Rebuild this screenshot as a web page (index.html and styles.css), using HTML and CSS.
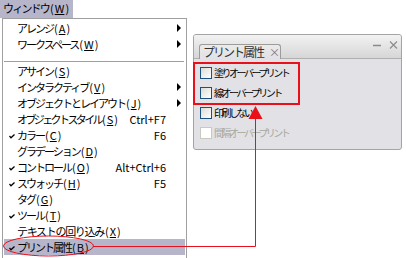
FILE: index.html
```html
<!DOCTYPE html>
<html lang="ja">
<head>
<meta charset="utf-8">
<link rel="stylesheet" href="styles.css">
</head>
<body>
<div class="menubar"><span class="menu-title">ウィンドウ<span class="mn">(<u>W</u>)</span></span></div>
<div class="menu">
  <div class="item"><span class="chk"></span><span class="label">アレンジ<span class="mn">(<u>A</u>)</span></span><span class="sc"></span><span class="sub"><i class="tri"></i></span></div>
  <div class="item"><span class="chk"></span><span class="label">ワークスペース<span class="mn">(<u>W</u>)</span></span><span class="sc"></span><span class="sub"><i class="tri"></i></span></div>
  <div class="sep"></div>
  <div class="item"><span class="chk"></span><span class="label">アサイン<span class="mn">(<u>S</u>)</span></span><span class="sc"></span><span class="sub"></span></div>
  <div class="item"><span class="chk"></span><span class="label">インタラクティブ<span class="mn">(<u>V</u>)</span></span><span class="sc"></span><span class="sub"><i class="tri"></i></span></div>
  <div class="item"><span class="chk"></span><span class="label">オブジェクトとレイアウト<span class="mn">(<u>J</u>)</span></span><span class="sc"></span><span class="sub"><i class="tri"></i></span></div>
  <div class="item"><span class="chk"></span><span class="label kata">オブジェクトスタイル<span class="mn">(<u>S</u>)</span></span><span class="sc">Ctrl+F7</span><span class="sub"></span></div>
  <div class="item"><span class="chk"><svg width="6" height="5" viewBox="0 0 6 5"><path d="M0.5 2 L2 3.8 L5.5 0.5" fill="none" stroke="#000" stroke-width="1.3"/></svg></span><span class="label">カラー<span class="mn">(<u>C</u>)</span></span><span class="sc">F6</span><span class="sub"></span></div>
  <div class="item"><span class="chk"></span><span class="label">グラデーション<span class="mn">(<u>D</u>)</span></span><span class="sc"></span><span class="sub"></span></div>
  <div class="item"><span class="chk"><svg width="6" height="5" viewBox="0 0 6 5"><path d="M0.5 2 L2 3.8 L5.5 0.5" fill="none" stroke="#000" stroke-width="1.3"/></svg></span><span class="label">コントロール<span class="mn">(<u>O</u>)</span></span><span class="sc">Alt+Ctrl+6</span><span class="sub"></span></div>
  <div class="item"><span class="chk"><svg width="6" height="5" viewBox="0 0 6 5"><path d="M0.5 2 L2 3.8 L5.5 0.5" fill="none" stroke="#000" stroke-width="1.3"/></svg></span><span class="label">スウォッチ<span class="mn">(<u>H</u>)</span></span><span class="sc">F5</span><span class="sub"></span></div>
  <div class="item"><span class="chk"></span><span class="label">タグ<span class="mn">(<u>G</u>)</span></span><span class="sc"></span><span class="sub"></span></div>
  <div class="item"><span class="chk"><svg width="6" height="5" viewBox="0 0 6 5"><path d="M0.5 2 L2 3.8 L5.5 0.5" fill="none" stroke="#000" stroke-width="1.3"/></svg></span><span class="label">ツール<span class="mn">(<u>T</u>)</span></span><span class="sc"></span><span class="sub"></span></div>
  <div class="item"><span class="chk"></span><span class="label wide">テキストの回り込み<span class="mn">(<u>X</u>)</span></span><span class="sc"></span><span class="sub"></span></div>
  <div class="item active"><span class="chk"><svg width="6" height="5" viewBox="0 0 6 5"><path d="M0.5 2 L2 3.8 L5.5 0.5" fill="none" stroke="#000" stroke-width="1.3"/></svg></span><span class="label">プリント属性<span class="mn">(<u>B</u>)</span></span><span class="sc"></span><span class="sub"></span></div>
</div>

<div class="panel">
  <div class="panel-head">
    <div class="tab">プリント属性<span class="tab-x">×</span></div>
    <div class="win-btns">
      <svg width="30" height="10" viewBox="0 0 30 10"><path d="M4 5.5 H12" stroke="#8a8a8a" stroke-width="1.5"/><path d="M21 1.5 L28 8.5 M28 1.5 L21 8.5" stroke="#8a8a8a" stroke-width="1.1"/></svg>
    </div>
  </div>
  <div class="panel-body">
    <label class="opt"><span class="box"></span>塗りオーバープリント</label>
    <label class="opt"><span class="box"></span>線オーバープリント</label>
    <label class="opt"><span class="box"></span>印刷しない</label>
    <label class="opt disabled"><span class="box"></span>間隔オーバープリント</label>
  </div>
</div>

<div class="redbox"></div>

<svg class="annot" width="406" height="258" viewBox="0 0 406 258">
  <ellipse cx="48.5" cy="246" rx="45" ry="10" fill="none" stroke="#e8101a" stroke-width="1"/>
  <path d="M93 246.5 H255.5 V118" fill="none" stroke="#e8101a" stroke-width="1"/>
  <path d="M255.5 106 L262.5 119 L248.5 119 Z" fill="#e8101a"/>
</svg>
</body>
</html>
```

FILE: styles.css
```css
body {
  margin: 0;
  background: #fff;
  font-family: "Noto Sans CJK JP", "Noto Sans", sans-serif;
  font-size: 11px;
  color: #000;
  position: relative;
  width: 406px;
  height: 258px;
  overflow: hidden;
}

u { text-decoration-thickness: 1px; text-underline-offset: 1px; }

.mn { letter-spacing: 0; padding-left: 1px; }
.mn u { margin: 0 1px; }

.menubar { height: 18px; }
.menu-title {
  display: inline-block;
  height: 18px;
  width: 73px;
  background: #b6b5c9;
  line-height: 17px;
  padding-left: 3px;
  box-sizing: border-box;
  white-space: nowrap;
  letter-spacing: -1.8px;
}

.menu {
  margin-left: 2px;
  width: 185px;
  height: 240px;
  border: 1px solid #a0a0a0;
  border-bottom: none;
  box-sizing: border-box;
  padding-top: 1px;
}

.item {
  display: grid;
  grid-template-columns: 14px 1fr auto 20px;
  height: 16px;
  line-height: 16px;
  white-space: nowrap;
}
.label { letter-spacing: -2px; }
.label.kata { letter-spacing: -2.6px; }
.label.wide { letter-spacing: -1.3px; }
.item.active {
  background: linear-gradient(#b6b5c9, #b6b5c9) no-repeat 1px 0 / calc(100% - 2px) 100%;
}
.chk { display: flex; align-items: center; justify-content: flex-end; padding-right: 2px; padding-top: 2px; }
.sc { text-align: right; }
.sub { display: flex; align-items: center; justify-content: center; padding-left: 5px; }
.tri {
  display: block;
  width: 0; height: 0;
  border-left: 4px solid #000;
  border-top: 4px solid transparent;
  border-bottom: 4px solid transparent;
}

.sep {
  margin: 9px 2px 1px 1px;
  height: 0;
  border-top: 1px solid #a0a0a0;
}

.panel {
  position: absolute;
  left: 193px;
  top: 34px;
  width: 209px;
  height: 116px;
  box-sizing: border-box;
  border: 1px solid #a4a4a4;
  border-radius: 3px;
  background: #e1e1e6;
  font-size: 10px;
  overflow: hidden;
}
.panel-head {
  height: 24px;
  background: linear-gradient(#f2f2f2, #d6d6d6);
  border-bottom: 1px solid #b0b0b0;
  display: flex;
  align-items: flex-end;
  justify-content: space-between;
  padding-left: 5px;
  box-sizing: border-box;
}
.tab {
  height: 15px;
  width: 82px;
  box-sizing: border-box;
  border: 1px solid #9c9c9c;
  border-bottom: none;
  border-radius: 3px 3px 0 0;
  background: linear-gradient(#ebebeb, #e1e1e6);
  padding-left: 3px;
  line-height: 14px;
  color: #333;
  font-size: 12px;
  letter-spacing: -2px;
  white-space: nowrap;
  margin-bottom: -1px;
}
.tab-x { color: #777; font-size: 11px; letter-spacing: 0; margin-left: 6px; }
.win-btns { align-self: flex-start; padding-top: 3px; padding-right: 2px; }

.panel-body {
  display: flex;
  flex-direction: column;
  gap: 7px;
  padding: 7px 0 0 6px;
}
.opt {
  display: flex;
  align-items: center;
  gap: 2px;
  height: 13px;
  line-height: 13px;
  color: #000;
  white-space: nowrap;
  letter-spacing: -2.5px;
}
.box {
  width: 12px;
  height: 12px;
  box-sizing: border-box;
  border: 1px solid #1c5180;
  background: linear-gradient(135deg, #dcdcd6, #ffffff);
}
.opt.disabled { color: #a8a89c; }
.opt.disabled .box { border-color: #c9c9c1; background: #fff; }

.redbox {
  position: absolute;
  left: 193px;
  top: 62px;
  width: 107px;
  height: 43px;
  box-sizing: border-box;
  border: 2px solid #e8101a;
}

.annot { position: absolute; left: 0; top: 0; pointer-events: none; }
```
